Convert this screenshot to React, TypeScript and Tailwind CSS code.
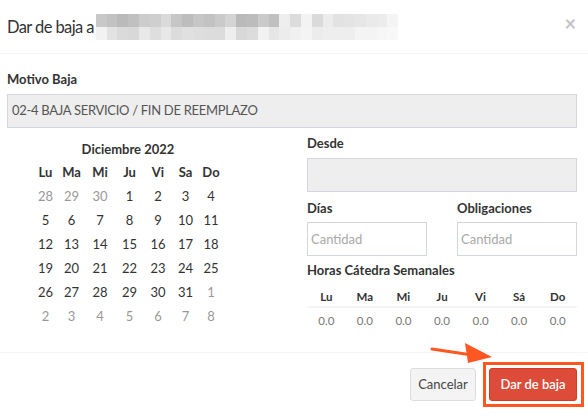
import React from 'react'

const topBlocks = [
  '#c8c8c8', '#c2c2c2', '#bababa', '#c0c0c0', '#cccccc', '#cfcfcf', '#dadada', '#c6c6c6', '#bdbdbd', '#c6c6c6',
  '#c2c2c2', '#cacaca', '#d4d4d4', '#bababa', '#bcbcbc', '#cacaca', '#c0c0c0', '#eeeeee', '#dcdcdc', '#f3f3f3',
  '#dadada', '#ececec', '#e2e2e2', '#e4e4e4', '#e6e6e6', '#eaeaea', '#ececec', '#f4f4f4',
]
const bottomBlocks = [
  '#f2f2f2', '#e2e2e2', '#dadada', '#d8d8d8', '#e8e8e8', '#dedede', '#e8e8e8', '#dcdcdc', '#e0e0e0', '#dedede',
  '#dcdcdc', '#dcdcdc', '#eeeeee', '#d8d8d8', '#dcdcdc', '#f2f2f2', '#e6e6e6', '#ececec', '#f0f0f0', '#f4f4f4',
  '#ececec', '#eeeeee', '#eeeeee', '#eeeeee', '#f4f4f4', '#f4f4f4', '#f6f6f6', '#f8f8f8',
]

const weekDays = ['Lu', 'Ma', 'Mi', 'Ju', 'Vi', 'Sa', 'Do']
const hourDays = ['Lu', 'Ma', 'Mi', 'Ju', 'Vi', 'Sá', 'Do']

type Day = { n: number; muted?: boolean }

const weeks: Day[][] = [
  [{ n: 28, muted: true }, { n: 29, muted: true }, { n: 30, muted: true }, { n: 1 }, { n: 2 }, { n: 3 }, { n: 4 }],
  [{ n: 5 }, { n: 6 }, { n: 7 }, { n: 8 }, { n: 9 }, { n: 10 }, { n: 11 }],
  [{ n: 12 }, { n: 13 }, { n: 14 }, { n: 15 }, { n: 16 }, { n: 17 }, { n: 18 }],
  [{ n: 19 }, { n: 20 }, { n: 21 }, { n: 22 }, { n: 23 }, { n: 24 }, { n: 25 }],
  [{ n: 26 }, { n: 27 }, { n: 28 }, { n: 29 }, { n: 30 }, { n: 31 }, { n: 1, muted: true }],
  [{ n: 2, muted: true }, { n: 3, muted: true }, { n: 4, muted: true }, { n: 5, muted: true }, { n: 6, muted: true }, { n: 7, muted: true }, { n: 8, muted: true }],
]

const calCols = 'grid grid-cols-[25px_27px_30px_29px_28px_27px_24px]'

const BlurredName = () => (
  <div className="ml-[2px] flex flex-col">
    {[topBlocks, bottomBlocks].map((row, i) => (
      <div key={i} className="flex">
        {row.map((c, j) => (
          <div key={j} className="w-[10.8px] h-[13px]" style={{ background: c }} />
        ))}
      </div>
    ))}
  </div>
)

export default function App() {
  return (
    <div
      className="relative w-[588px] h-[416px] bg-white text-[#333] overflow-hidden"
      style={{ fontFamily: 'Lato, "Open Sans", sans-serif' }}
    >
      {/* header */}
      <div className="h-[54px] flex items-center justify-between pl-[7px] pr-[12px] border-b border-[#f4f4f4]">
        <div className="flex items-center">
          <h4 className="text-[16.5px] leading-[26px] tracking-[-0.6px] text-[#333]">Dar de baja a</h4>
          <BlurredName />
        </div>
        <button className="text-[#c4c4c4] text-[20px] leading-none font-bold -mt-[8px]">×</button>
      </div>

      {/* body */}
      <div className="h-[299px] pl-[7px] pr-[11px] pt-[15px] border-b border-[#f4f4f4]">
        <label className="block text-[13px] leading-[20px] font-bold">Motivo Baja</label>
        <div className="mt-[5px] h-[34px] bg-[#eeeeee] border border-[#d2d6de] px-[4px] flex items-center text-[13px] tracking-[-0.3px] text-[#555]">
          02-4 BAJA SERVICIO / FIN DE REEMPLAZO
        </div>

        <div className="flex">
          {/* calendar */}
          <div className="w-[300px] pl-[26px] pt-[11px]">
            <div className="w-[190px] text-center text-[13px] leading-[20px] font-bold">Diciembre 2022</div>
            <div className={`${calCols} mt-[2px] h-[24px] items-center text-[13px] font-bold text-[#333]`}>
              {weekDays.map((d) => (
                <div key={d} className="text-center">{d}</div>
              ))}
            </div>
            {weeks.map((w, i) => (
              <div key={i} className={`${calCols} h-[24px] items-center text-[13px]`}>
                {w.map((d, j) => (
                  <div key={j} className={`text-center ${d.muted ? 'text-[#999]' : 'text-[#333]'}`}>
                    {d.n}
                  </div>
                ))}
              </div>
            ))}
          </div>

          {/* right side */}
          <div className="flex-1">
            <label className="block mt-[5px] text-[13px] leading-[20px] font-bold">Desde</label>
            <div className="mt-[5px] h-[34px] bg-[#eeeeee] border border-[#d2d6de]" />

            <div className="grid grid-cols-2 gap-x-[30px]">
              <div>
                <label className="block mt-[6px] text-[13px] leading-[20px] font-bold">Días</label>
                <input
                  placeholder="Cantidad"
                  className="mt-[4px] w-full h-[34px] border border-[#d2d6de] px-[3px] text-[13px] placeholder:text-[#a8a8a8] outline-none"
                />
              </div>
              <div>
                <label className="block mt-[6px] text-[13px] leading-[20px] font-bold">Obligaciones</label>
                <input
                  placeholder="Cantidad"
                  className="mt-[4px] w-full h-[34px] border border-[#d2d6de] px-[3px] text-[13px] placeholder:text-[#a8a8a8] outline-none"
                />
              </div>
            </div>

            <label className="block mt-[4px] text-[13px] leading-[20px] font-bold">Horas Cátedra Semanales</label>
            <div className="mt-[7px] grid grid-cols-7 h-[21px] items-center border-b-2 border-[#f4f4f4] text-[11.5px] font-bold">
              {hourDays.map((d) => (
                <div key={d} className="text-center">{d}</div>
              ))}
            </div>
            <div className="grid grid-cols-7 h-[26px] items-center text-[11.5px] text-[#777]">
              {hourDays.map((d) => (
                <div key={d} className="text-center">0.0</div>
              ))}
            </div>
          </div>
        </div>
      </div>

      {/* footer */}
      <div className="flex justify-end gap-[13px] pr-[11px] pt-[15px]">
        <button className="h-[33px] w-[66px] rounded-[3px] bg-[#f4f4f4] border border-[#dddddd] text-[13px] text-[#444]">
          Cancelar
        </button>
        <button className="h-[33px] w-[88px] rounded-[3px] bg-[#dd4b39] border border-[#d73925] text-[13px] font-semibold text-white">
          Dar de baja
        </button>
      </div>

      {/* annotation */}
      <div className="absolute left-[483px] top-[362px] w-[101px] h-[45px] border-[3px] border-[#ff5722]" />
      <svg className="absolute left-[428px] top-[340px]" width="70" height="26" viewBox="0 0 70 26">
        <line x1="4" y1="9" x2="44" y2="15" stroke="#ff5722" strokeWidth="3" strokeLinecap="round" />
        <polygon points="37,3 64,17 40,23" fill="#ff5722" />
      </svg>
    </div>
  )
}
